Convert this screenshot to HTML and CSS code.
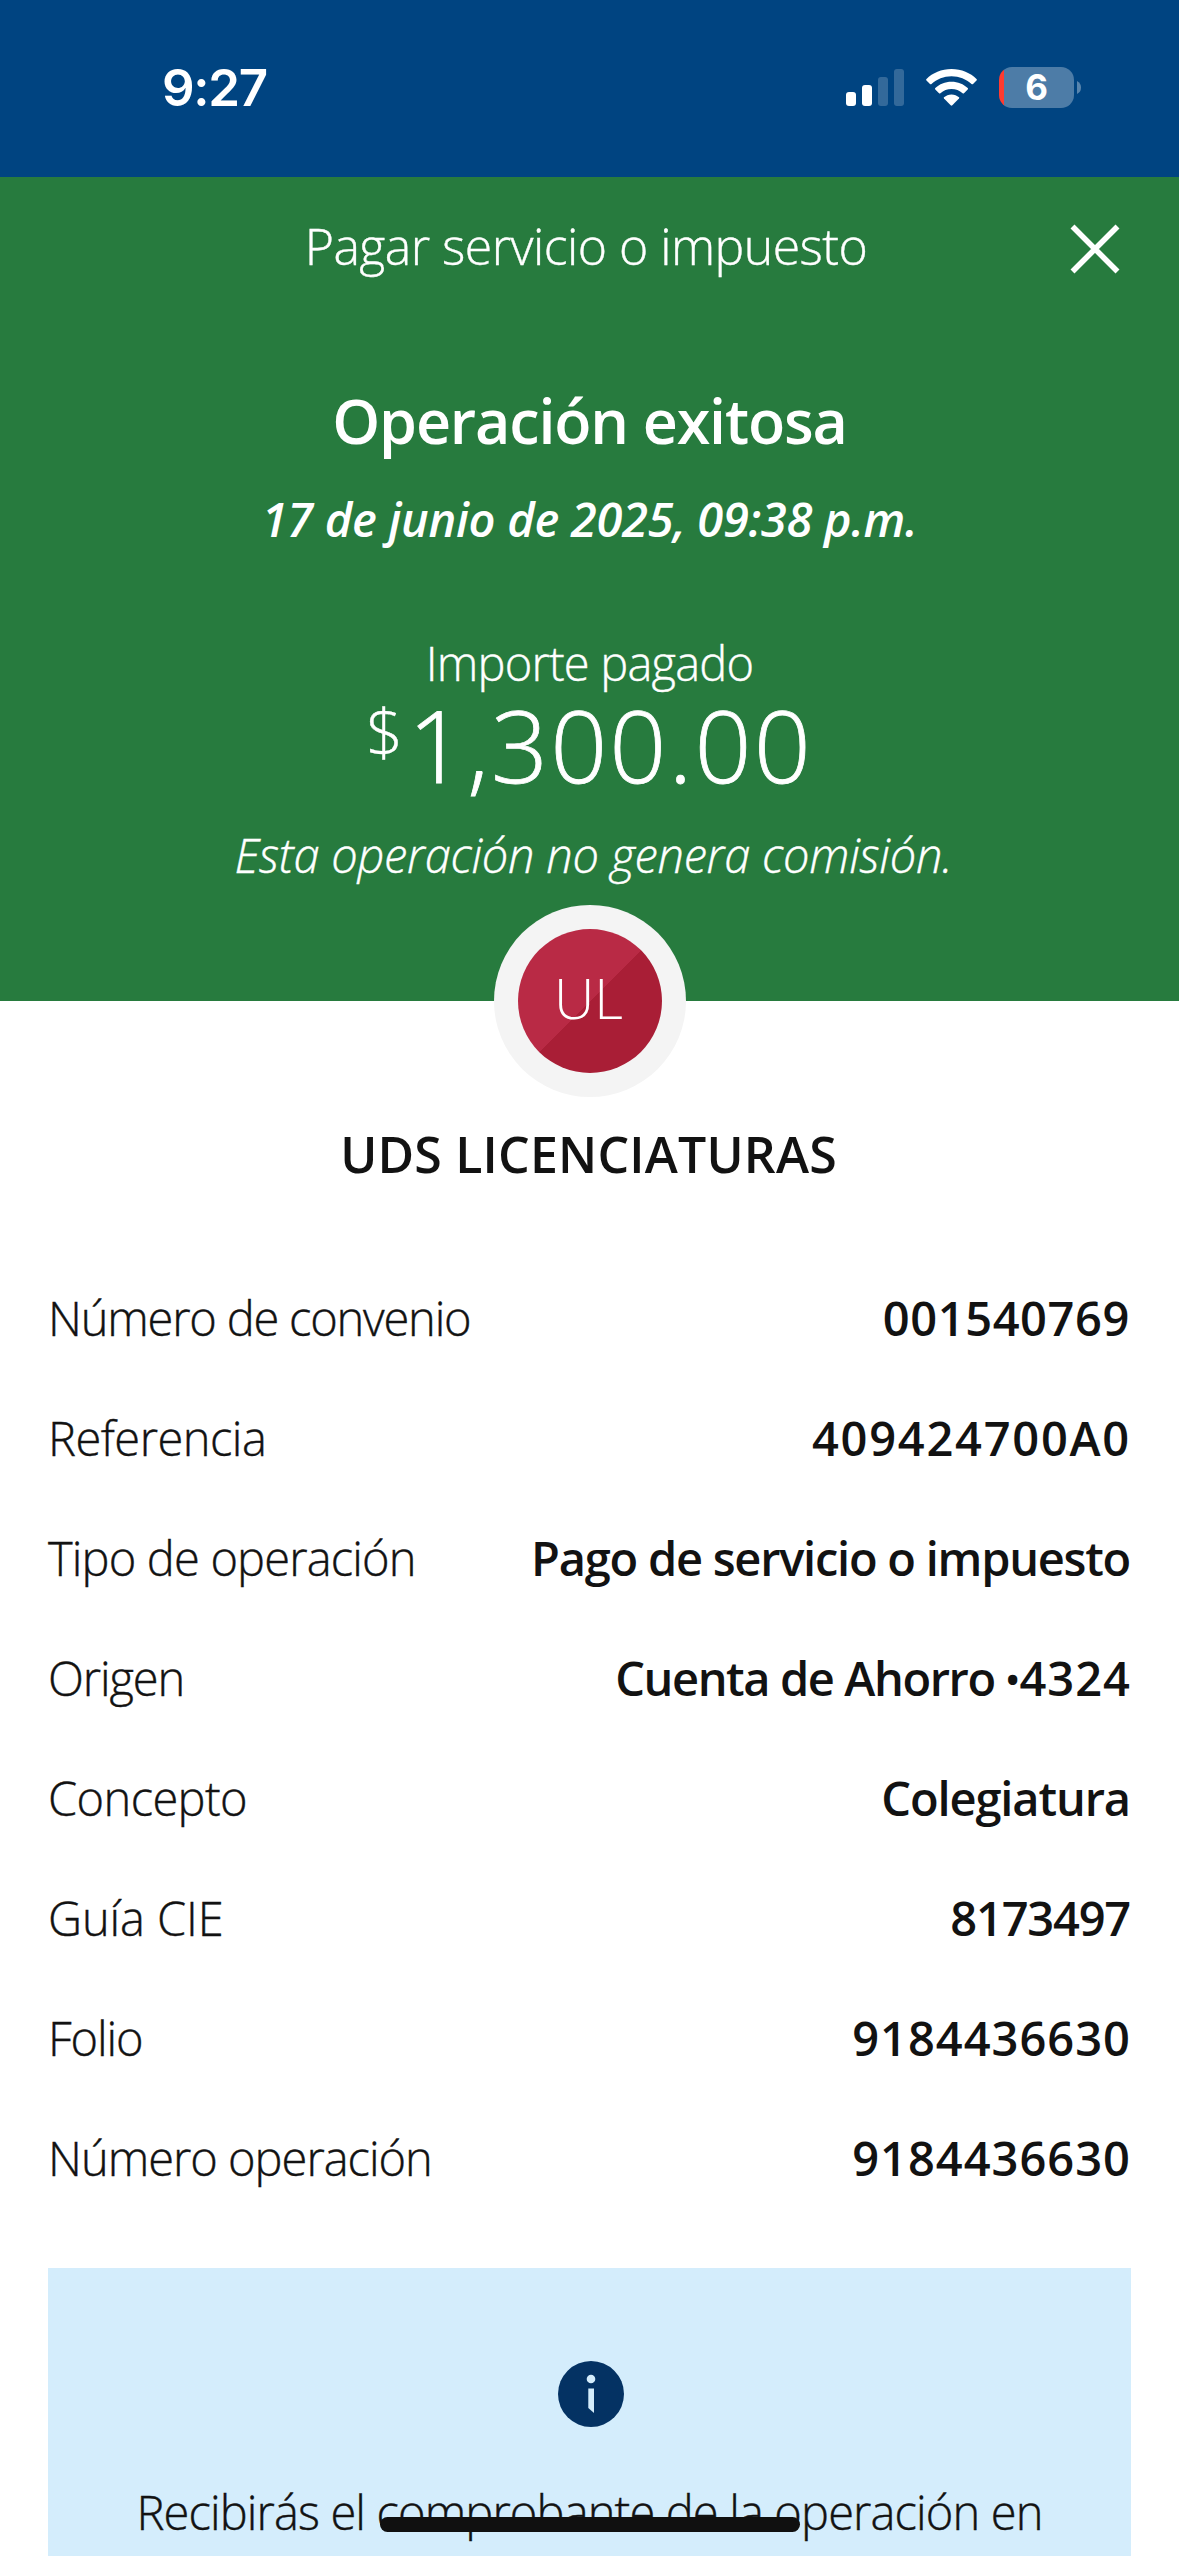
FILE: index.html
```html
<!DOCTYPE html>
<html lang="es">
<head>
<meta charset="utf-8">
<title>Pagar servicio o impuesto</title>
<link rel="stylesheet" href="styles.css">
</head>
<body>
<div class="status">
  <span class="time">9:27</span>
  <div class="status-icons">
    <svg class="signal" width="58" height="37" viewBox="0 0 58 37" fill="#fff"><rect y="23" width="10" height="14" rx="3"/><rect x="16" y="16" width="10" height="21" rx="3"/><g opacity=".2"><rect x="32" y="8" width="10" height="29" rx="3"/><rect x="48" width="10" height="37" rx="3"/></g></svg>
    <svg class="wifi" width="51" height="37" viewBox="0 0 51 37" fill="#fff"><path d="M25.500 0C15.500 0 6.600 3.900.500 9.900Q-.200 10.600.500 11.400L4 15Q4.700 15.700 5.500 15C10.800 10.100 17.800 7.200 25.500 7.200S40.200 10.100 45.500 15Q46.300 15.700 47 15L50.500 11.400Q51.200 10.600 50.500 9.900C44.400 3.900 35.500 0 25.500 0Z"/><path d="M25.500 12.700C19.100 12.700 13.400 15.100 9.300 19.100Q8.600 19.800 9.300 20.500L13 24.200Q13.700 24.900 14.400 24.200C17.400 21.600 21.300 20 25.500 20S33.600 21.600 36.600 24.200Q37.300 24.900 38 24.200L41.700 20.500Q42.400 19.800 41.700 19.100C37.600 15.100 31.900 12.700 25.500 12.700Z"/><path d="M25.500 25.400C22.600 25.400 20 26.500 18 28.200Q17.400 28.800 18 29.500L24.700 36.300Q25.500 37 26.300 36.300L33 29.500Q33.600 28.800 33 28.200C31 26.500 28.400 25.400 25.500 25.400Z"/></svg>
    <div class="battery">6</div>
    <svg class="nub" width="4" height="13" viewBox="0 0 4 13"><path d="M0 0Q4 2 4 6.500T0 13Z" fill="#fff" opacity=".35"/></svg>
  </div>
</div>
<header class="hero">
  <div class="bar">
    <h1 class="title">Pagar servicio o impuesto</h1>
    <svg class="close" width="50" height="50" viewBox="0 0 50 50"><path d="M2.500 2.500L47.500 47.500M47.500 2.500L2.500 47.500" stroke="#fff" stroke-width="5.600"/></svg>
  </div>
  <h2 class="result">Operación exitosa</h2>
  <p class="date">17 de junio de 2025, 09:38 p.m.</p>
  <p class="caption">Importe pagado</p>
  <div class="amount"><span class="currency">$</span><span class="figure">1,300.00</span></div>
  <p class="fee">Esta operación no genera comisión.</p>
</header>
<main class="detail">
  <div class="avatar"><div class="initials">UL</div></div>
  <h3 class="payee">UDS LICENCIATURAS</h3>
  <dl class="rows">
    <div class="row agreement"><dt>Número de convenio</dt><dd>001540769</dd></div>
    <div class="row reference"><dt>Referencia</dt><dd>409424700A0</dd></div>
    <div class="row kind"><dt>Tipo de operación</dt><dd>Pago de servicio o impuesto</dd></div>
    <div class="row source"><dt>Origen</dt><dd>Cuenta de Ahorro <span class="dot">•</span><span class="digits">4324</span></dd></div>
    <div class="row concept"><dt>Concepto</dt><dd>Colegiatura</dd></div>
    <div class="row guide"><dt>Guía CIE</dt><dd>8173497</dd></div>
    <div class="row folio"><dt>Folio</dt><dd>9184436630</dd></div>
    <div class="row operation"><dt>Número operación</dt><dd>9184436630</dd></div>
  </dl>
  <aside class="notice">
    <svg class="info" width="66" height="66" viewBox="0 0 66 66"><circle cx="33" cy="33" r="33" fill="#043263"/><g fill="#d4edfc"><circle cx="33" cy="18" r="4.300"/><path d="M30.300 27.500H36V52L30.300 47Z"/></g></svg>
    <p class="notice-text">Recibirás el comprobante de la operación en</p>
  </aside>
</main>
<div class="home-indicator"></div>
</body>
</html>
```

FILE: styles.css
```css
* { box-sizing: border-box; margin: 0; padding: 0; }
body {
  width: 1179px;
  height: 2556px;
  position: relative;
  overflow: hidden;
  background: #fff;
  color: #121212;
  font-family: "Open Sans", sans-serif;
  font-size: 47px;
  font-weight: 300;
  white-space: nowrap;
}

/* Status bar */
.status {
  height: 177px;
  padding: 67px 98px 0 162px;
  display: flex;
  justify-content: space-between;
  align-items: flex-start;
  background: #004481;
  color: #fff;
  font-family: Inter, sans-serif;
}
.time { font-size: 51px; font-weight: 600; line-height: 42px; letter-spacing: -1.3px; }
.status-icons { display: flex; align-items: flex-start; }
.signal, .wifi { margin-top: 2px; }
.wifi { margin-left: 22px; }
.battery {
  width: 75px;
  height: 41px;
  margin-left: 22px;
  border-radius: 13px;
  background: linear-gradient(90deg, #ff3b30 5px, #4d7ca7 5px);
  font-size: 35px;
  font-weight: 700;
  line-height: 41px;
  text-align: center;
}
.nub { margin: 14px 0 0 3px; }

/* Result header */
.hero {
  height: 824px;
  background: #277b3e;
  color: #fff;
  text-align: center;
}
.bar {
  height: 135px;
  padding: 0 59px;
  display: grid;
  grid-template-columns: 50px 1fr 50px;
  align-items: center;
}
.title {
  grid-column: 2;
  margin-left: -7px;
  font-size: 50px;
  font-weight: 300;
  line-height: 139px;
  letter-spacing: -0.55px;
}
.close { margin-top: 5px; }
.title, .caption, .fee, .currency, dt, .notice-text { -webkit-text-stroke: 0.4px currentColor; }
.result { margin-top: 67px; font-size: 61px; font-weight: 550; line-height: 84px; letter-spacing: -1.15px; }
.date { margin-top: 24px; font-weight: 550; font-style: italic; line-height: 64px; letter-spacing: -0.3px; }
.caption { margin-top: 82px; line-height: 60px; letter-spacing: -0.8px; }
.amount {
  height: 100px;
  margin-top: 1px;
  display: flex;
  justify-content: center;
  align-items: flex-start;
  gap: 5px;
}
.currency { font-size: 65px; line-height: 74px; }
.figure { font-size: 100px; line-height: 100px; letter-spacing: 2.15px; -webkit-text-stroke: 0.8px currentColor; }
.fee { margin-top: 29px; padding-left: 8px; font-style: italic; line-height: 64px; letter-spacing: -0.26px; }

/* Payee and operation details */
.avatar {
  width: 192px;
  height: 192px;
  margin: -96px auto 0;
  padding: 24px;
  border-radius: 50%;
  background: #f4f4f4;
}
.initials {
  height: 144px;
  padding-right: 2px;
  border-radius: 50%;
  background: linear-gradient(135deg, #b92a45 50%, #a91e36 50%);
  color: #fff;
  font-size: 56px;
  line-height: 137px;
  text-align: center;
}
.payee {
  margin-top: 22px;
  padding-right: 2px;
  font-size: 50px;
  font-weight: 550;
  line-height: 70px;
  letter-spacing: 0.2px;
  text-align: center;
}
.rows { margin-top: 69px; padding: 0 48px; }
.row { height: 120px; display: flex; justify-content: space-between; line-height: 121px; }
dd { padding-right: 1px; font-weight: 550; }
.dot { margin-right: 1px; font-size: 38px; vertical-align: 2px; line-height: 1; }
.digits { letter-spacing: 1px; }

.agreement dt { letter-spacing: -1.2px; }
.agreement dd { letter-spacing: 0.6px; }
.reference dt { letter-spacing: -0.5px; }
.reference dd { letter-spacing: 1.75px; padding: 0; }
.kind dt { letter-spacing: -0.83px; }
.kind dd { letter-spacing: -1.25px; }
.source dt { letter-spacing: -1.1px; }
.source dd { padding: 0; letter-spacing: -1.4px; }
.source .digits { letter-spacing: 1px; }
.concept dt { letter-spacing: -0.6px; }
.concept dd { letter-spacing: -1.12px; }
.guide dt { letter-spacing: -0.1px; }
.guide dd { letter-spacing: -1.2px; }
.folio dt { letter-spacing: -1.1px; }
.operation dt { letter-spacing: -1px; }
.folio dd, .operation dd { letter-spacing: 1px; padding: 0; }

/* Receipt notice */
.notice {
  height: 360px;
  margin: 50px 48px 0;
  padding-top: 93px;
  background: #d4edfc;
  text-align: center;
}
.info { display: block; margin: 0 510px 49px; }
.notice-text { line-height: 72px; letter-spacing: -0.86px; }

.home-indicator {
  position: absolute;
  left: 380px;
  bottom: 24px;
  width: 420px;
  height: 15px;
  border-radius: 8px;
  background: #101010;
}
```
